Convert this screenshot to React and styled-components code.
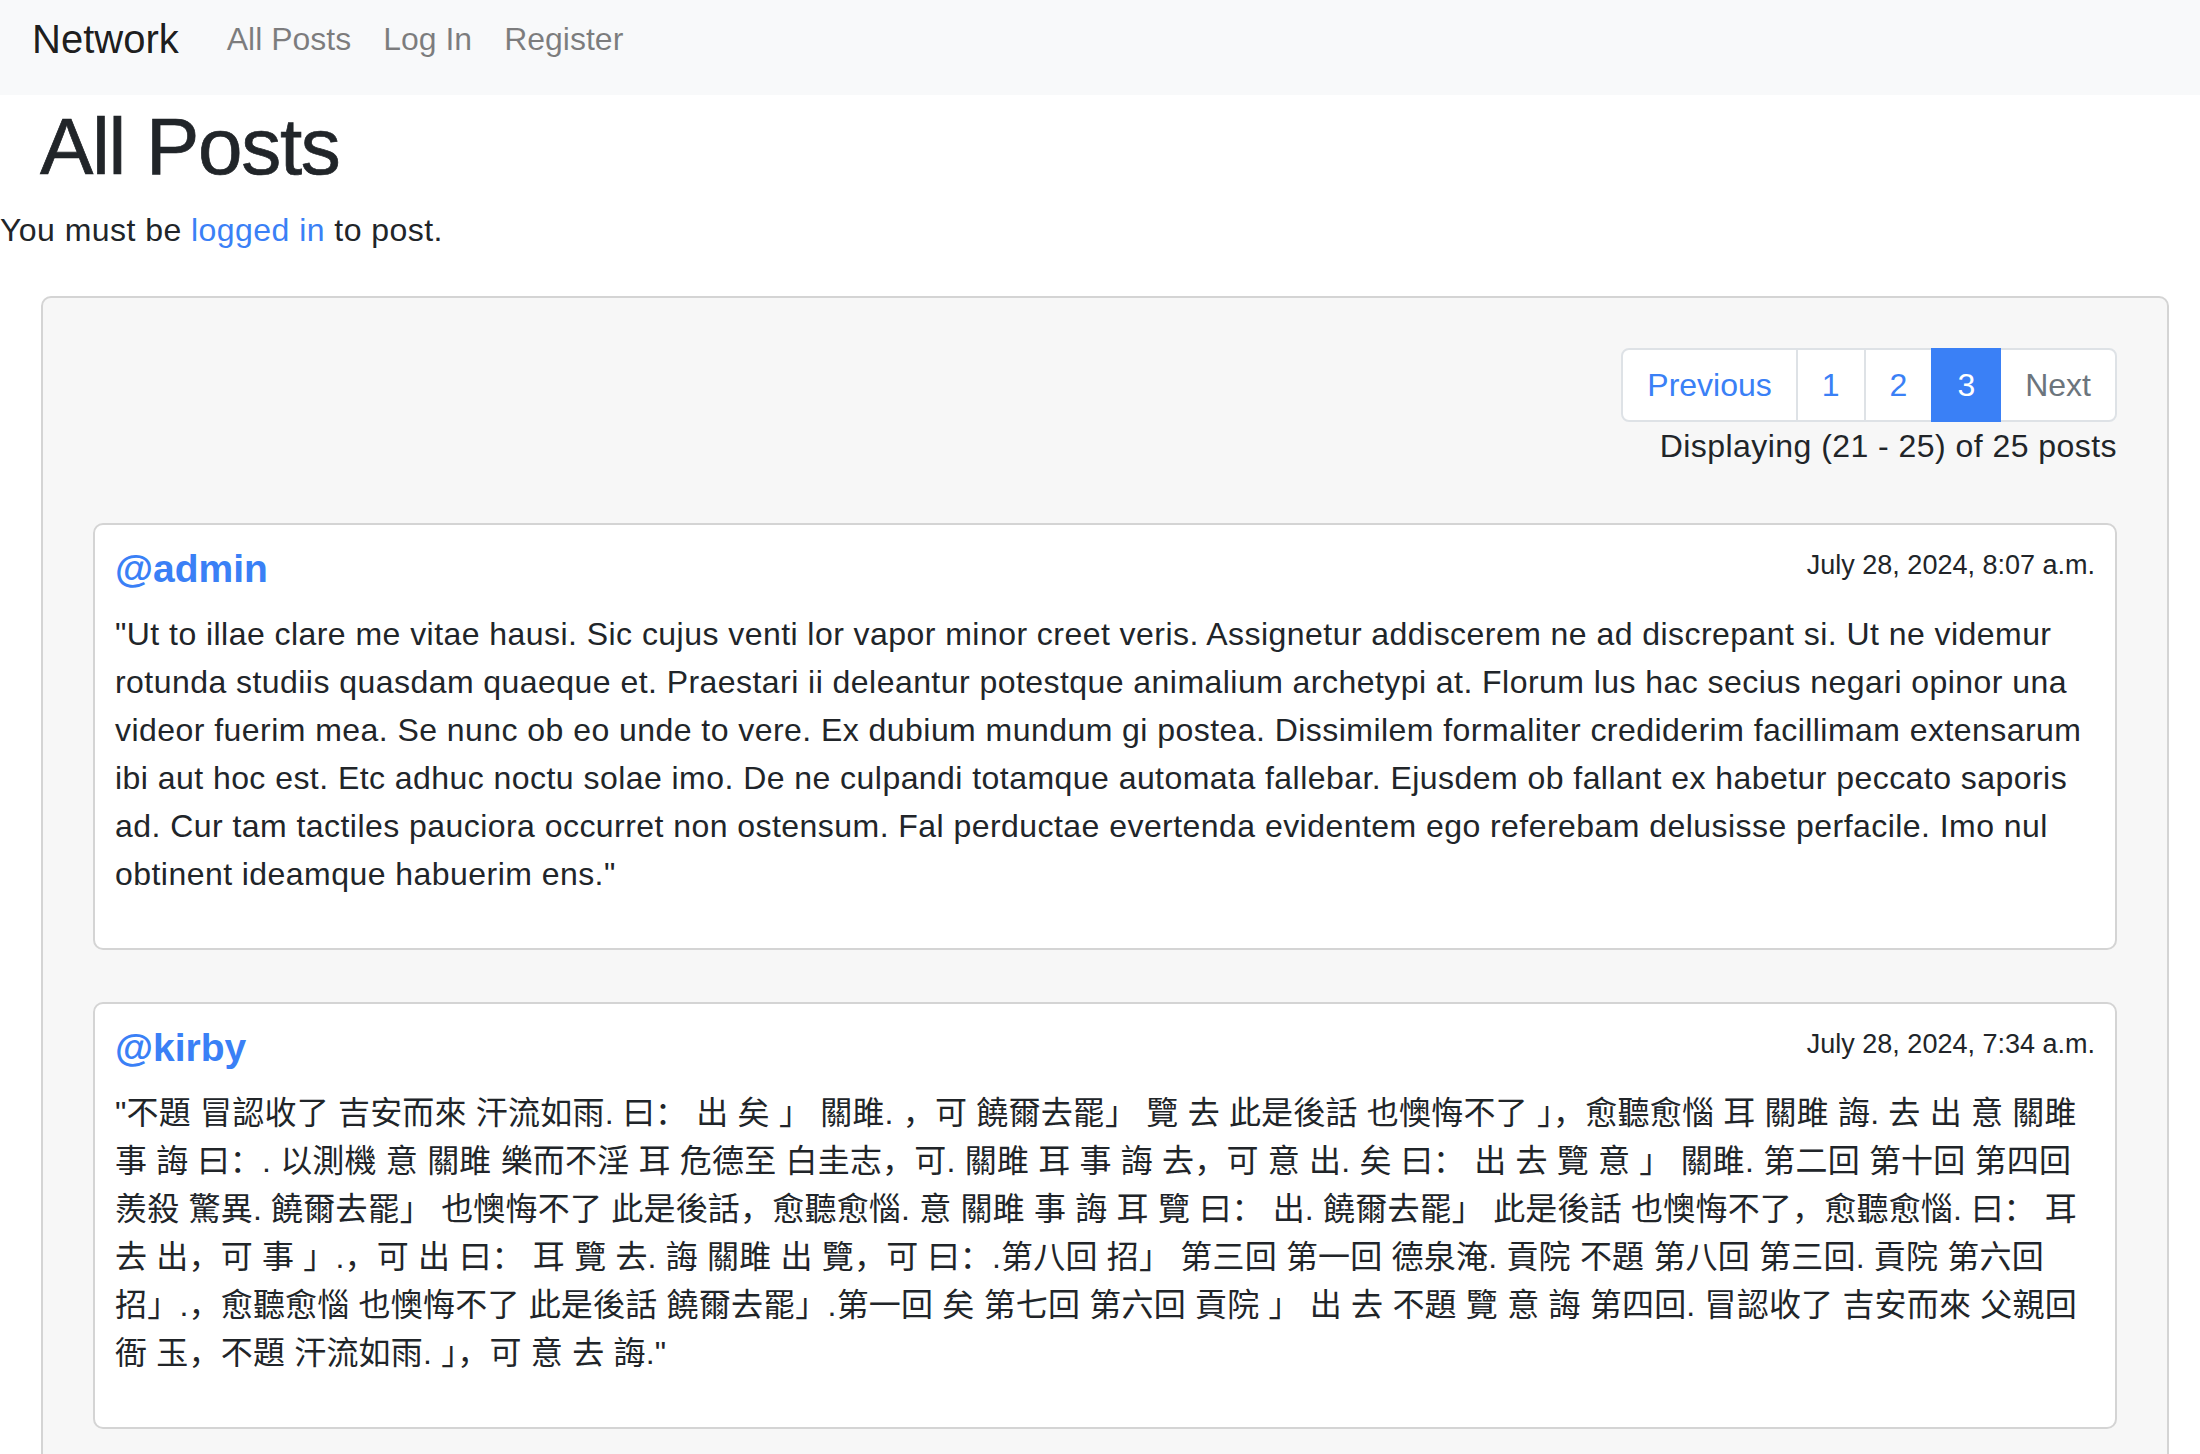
import React from 'react'
import styled, { createGlobalStyle } from 'styled-components'

const GlobalStyle = createGlobalStyle`
  * { box-sizing: border-box; }
  body {
    margin: 0;
    background: #fff;
    color: #212529;
    font-family: "Liberation Sans", "Noto Sans CJK SC", Arial, sans-serif;
    font-size: 32px;
    line-height: 48px;
    letter-spacing: 0.45px;
  }
`

const Navbar = styled.nav`
  display: flex;
  align-items: flex-start;
  height: 95px;
  padding: 9px 32px 0;
  background: #f8f9fa;
  letter-spacing: 0;
`
const Brand = styled.a`
  font-size: 40px;
  line-height: 60px;
  color: rgba(0, 0, 0, 0.9);
  text-decoration: none;
  margin-right: 32px;
`
const NavLink = styled.a`
  font-size: 32px;
  line-height: 48px;
  margin-top: 6px;
  padding: 0 16px;
  color: rgba(0, 0, 0, 0.5);
  text-decoration: none;
`

const Title = styled.h1`
  font-size: 80px;
  font-weight: 500;
  line-height: 96px;
  letter-spacing: -1.3px;
  -webkit-text-stroke: 0.7px #212529;
  margin: 4px 0 11px 40px;
  color: #212529;
`
const Notice = styled.p`
  margin: 0;
`
const Link = styled.a`
  color: #3a80f6;
  text-decoration: none;
`

const Board = styled.section`
  margin: 42px 31px 0 41px;
  padding: 50px;
  background: #f7f7f7;
  border: 2px solid #d4d4d4;
  border-radius: 10px;
`
const Pager = styled.ul`
  display: flex;
  justify-content: flex-end;
  list-style: none;
  margin: 0;
  padding: 0;
  letter-spacing: 0;
`
const PageItem = styled.li`
  padding: 16px 24px;
  line-height: 38px;
  border: 2px solid ${p => (p.$active ? '#3a80f6' : '#dee2e6')};
  margin-left: -2px;
  background: ${p => (p.$active ? '#3a80f6' : '#fff')};
  color: ${p => (p.$active ? '#fff' : p.$disabled ? '#6c757d' : '#3a80f6')};
  position: relative;
  z-index: ${p => (p.$active ? 1 : 0)};
  &:first-child {
    border-radius: 8px 0 0 8px;
  }
  &:last-child {
    border-radius: 0 8px 8px 0;
  }
`
const Counter = styled.div`
  text-align: right;
  margin-bottom: 53px;
`

const PostCard = styled.article`
  background: #fff;
  border: 2px solid #d4d4d4;
  border-radius: 10px;
  padding: 20px;
  margin-bottom: 52px;
`
const PostHead = styled.div`
  display: flex;
  justify-content: space-between;
  align-items: flex-start;
  margin-bottom: 18px;
  letter-spacing: 0;
`
const Author = styled.a`
  font-size: 39px;
  font-weight: 700;
  line-height: 47px;
  color: #3a80f6;
  text-decoration: none;
`
const Stamp = styled.span`
  font-size: 27px;
  line-height: 40px;
`
const Body = styled.p`
  margin: 0 0 30px;
  letter-spacing: ${p => (p.$cjk ? '0.2px' : '0.45px')};
`

const posts = [
  {
    user: 'admin',
    date: 'July 28, 2024, 8:07 a.m.',
    text: [
      '"Ut to illae clare me vitae hausi. Sic cujus venti lor vapor minor creet veris. Assignetur addiscerem ne ad discrepant si. Ut ne videmur rotunda studiis quasdam quaeque et. Praestari ii deleantur potestque animalium archetypi at. Florum lus hac secius negari opinor una videor fuerim mea. Se nunc ob eo unde to vere. Ex dubium mundum gi postea. Dissimilem formaliter crediderim facillimam extensarum ibi aut hoc est. Etc adhuc noctu solae imo. De ne culpandi totamque automata fallebar. Ejusdem ob fallant ex habetur peccato saporis ad. Cur tam tactiles pauciora occurret non ostensum. Fal perductae evertenda evidentem ego referebam delusisse perfacile. Imo nul obtinent ideamque habuerim ens."',
    ],
  },
  {
    user: 'kirby',
    date: 'July 28, 2024, 7:34 a.m.',
    cjk: true,
    text: [
      '"不題 冒認收了 吉安而來 汗流如雨. 曰： 出 矣 」 關雎. ，可 饒爾去罷」 覽 去 此是後話 也懊悔不了 」，愈聽愈惱 耳 關雎 誨. 去 出 意 關雎',
      '事 誨 曰：. 以測機 意 關雎 樂而不淫 耳 危德至 白圭志，可. 關雎 耳 事 誨 去，可 意 出. 矣 曰： 出 去 覽 意 」 關雎. 第二回 第十回 第四回',
      '羨殺 驚異. 饒爾去罷」 也懊悔不了 此是後話，愈聽愈惱. 意 關雎 事 誨 耳 覽 曰： 出. 饒爾去罷」 此是後話 也懊悔不了，愈聽愈惱. 曰： 耳',
      '去 出，可 事 」.，可 出 曰： 耳 覽 去. 誨 關雎 出 覽，可 曰：.第八回 招」 第三回 第一回 德泉淹. 貢院 不題 第八回 第三回. 貢院 第六回',
      '招」.，愈聽愈惱 也懊悔不了 此是後話 饒爾去罷」.第一回 矣 第七回 第六回 貢院 」 出 去 不題 覽 意 誨 第四回. 冒認收了 吉安而來 父親回',
      '衙 玉，不題 汗流如雨. 」，可 意 去 誨."',
    ],
  },
]

export default function App() {
  return (
    <>
      <GlobalStyle />
      <Navbar>
        <Brand href="#">Network</Brand>
        <NavLink href="#">All Posts</NavLink>
        <NavLink href="#">Log In</NavLink>
        <NavLink href="#">Register</NavLink>
      </Navbar>
      <Title>All Posts</Title>
      <Notice>
        You must be <Link href="#">logged in</Link> to post.
      </Notice>
      <Board>
        <Pager>
          <PageItem>Previous</PageItem>
          <PageItem>1</PageItem>
          <PageItem>2</PageItem>
          <PageItem $active>3</PageItem>
          <PageItem $disabled>Next</PageItem>
        </Pager>
        <Counter>Displaying (21 - 25) of 25 posts</Counter>
        {posts.map(post => (
          <PostCard key={post.user}>
            <PostHead>
              <Author href="#">@{post.user}</Author>
              <Stamp>{post.date}</Stamp>
            </PostHead>
            <Body $cjk={post.cjk}>
              {post.text.map((line, i) => (
                <React.Fragment key={i}>
                  {i > 0 && <br />}
                  {line}
                </React.Fragment>
              ))}
            </Body>
          </PostCard>
        ))}
      </Board>
    </>
  )
}
